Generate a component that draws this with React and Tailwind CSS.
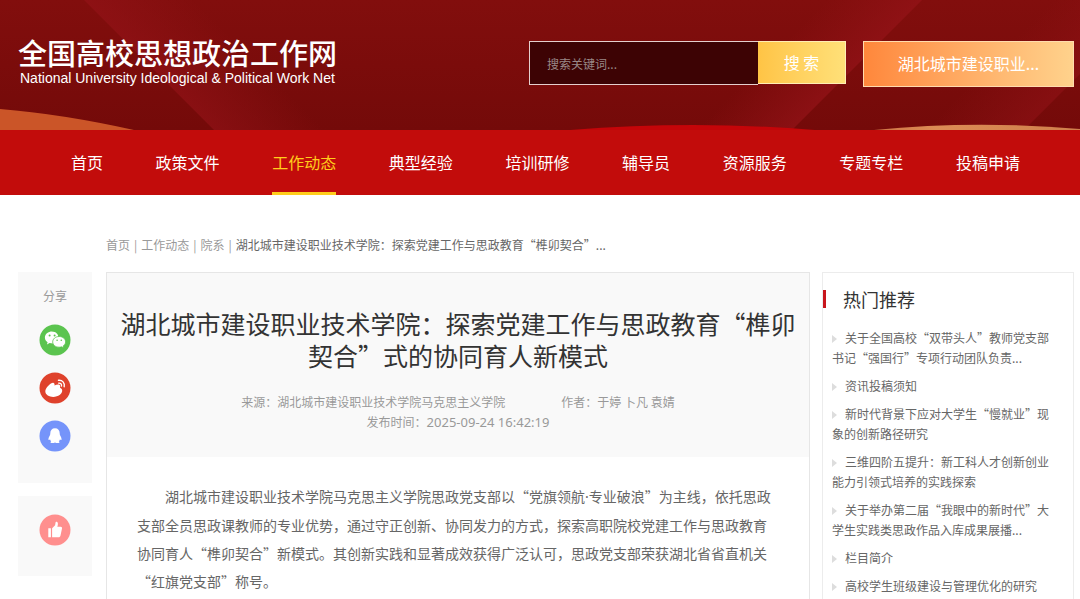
import React, { useState } from 'react';

const navItems = ['首页', '政策文件', '工作动态', '典型经验', '培训研修', '辅导员', '资源服务', '专题专栏', '投稿申请'];

const hotList = [
  '关于全国高校“双带头人”教师党支部书记“强国行”专项行动团队负责...',
  '资讯投稿须知',
  '新时代背景下应对大学生“慢就业”现象的创新路径研究',
  '三维四阶五提升：新工科人才创新创业能力引领式培养的实践探索',
  '关于举办第二届“我眼中的新时代”大学生实践类思政作品入库成果展播...',
  '栏目简介',
  '高校学生班级建设与管理优化的研究',
];

function BannerArt() {
  return (
    <svg className="absolute inset-0 h-full w-full" viewBox="0 0 1080 130" preserveAspectRatio="none" aria-hidden="true">
      <defs>
        <linearGradient id="base" x1="0" y1="0" x2="0" y2="1">
          <stop offset="0" stopColor="#820e0d" />
          <stop offset="1" stopColor="#740a09" />
        </linearGradient>
        <linearGradient id="beamLeft" gradientUnits="userSpaceOnUse" x1="150" y1="65" x2="205" y2="10">
          <stop offset="0" stopColor="#951318" stopOpacity="0.6" />
          <stop offset="1" stopColor="#951318" stopOpacity="0" />
        </linearGradient>
        <linearGradient id="beamRight" gradientUnits="userSpaceOnUse" x1="858" y1="65" x2="810" y2="17">
          <stop offset="0" stopColor="#951318" stopOpacity="0.7" />
          <stop offset="1" stopColor="#951318" stopOpacity="0" />
        </linearGradient>
        <linearGradient id="beamEdge" gradientUnits="userSpaceOnUse" x1="1085" y1="65" x2="1037" y2="17">
          <stop offset="0" stopColor="#951318" stopOpacity="0.5" />
          <stop offset="1" stopColor="#951318" stopOpacity="0" />
        </linearGradient>
        <linearGradient id="gold" x1="0" y1="0" x2="1" y2="0">
          <stop offset="0" stopColor="#cf7345" />
          <stop offset="0.3" stopColor="#dc8c55" />
          <stop offset="1" stopColor="#cf7f4c" />
        </linearGradient>
      </defs>
      <rect width="1080" height="130" fill="url(#base)" />
      <path d="M84 0H240L370 130H214Z" fill="url(#beamLeft)" />
      <path d="M922 0H780L650 130H792Z" fill="url(#beamRight)" />
      <path d="M1154 0H1010L880 130H1024Z" fill="url(#beamEdge)" />
      <path d="M0 109Q62 114 134 130H0Z" fill="#cb5528" />
      <path d="M570 130Q695 120 815 130Z" fill="#c40509" />
      <path d="M874 130Q975 120 1080 129V130Z" fill="url(#gold)" />
    </svg>
  );
}

function WechatIcon() {
  return (
    <svg viewBox="0 0 32 32" className="h-8 w-8" aria-hidden="true">
      <circle cx="16" cy="16" r="15.5" fill="#5bc44f" />
      <path fill="#fff" d="M13.2 7.6c-4.2 0-7.3 2.6-7.3 6 0 2 1 3.6 2.7 4.7l-.7 2.2 2.7-1.4c1 .3 2 .4 3.3.4h4c2-1.4 2-9-.1-10.1-1.2-1.1-2.8-1.8-5.3-1.8z" />
      <path fill="#fff" stroke="#5bc44f" strokeWidth="0.8" d="M20.2 12.5c-3.7 0-6.5 2.4-6.5 5.4s2.8 5.3 6.5 5.3c.8 0 1.6-.1 2.3-.4l2.2 1.3-.6-2c1.5-1 2.5-2.500 2.500-4.200 0-3-2.800-5.400-6.400-5.400z" />
      <g fill="#5bc44f">
        <circle cx="10.6" cy="11.6" r="1" />
        <circle cx="15.6" cy="11.6" r="1" />
        <circle cx="18.1" cy="16.3" r="0.8" />
        <circle cx="22.3" cy="16.3" r="0.8" />
      </g>
    </svg>
  );
}

function WeiboIcon() {
  return (
    <svg viewBox="0 0 32 32" className="h-8 w-8" aria-hidden="true">
      <circle cx="16" cy="16" r="15.5" fill="#df422c" />
      <path fill="#fff" d="M14.3 10.7c-1.7-.7-8 4.800-8 8.600 0 3.600 4 5.600 7.900 5.600 5.200 0 9-3.100 9-6.100 0-1.700-1.100-2.600-2.200-3 .5-1.500.3-2.600-.7-3.100-1.200-.6-3 0-4.800.7.200-1.300 0-2.300-1.200-2.700z" />
      <g fill="none" stroke="#fff" strokeLinecap="round">
        <path strokeWidth="1.4" d="M19.5 8.3c3.700-.5 6.600 2.500 5.700 6.400" />
        <path strokeWidth="1.3" d="M19.7 11.1c1.900-.2 3.100 1 2.800 2.900" />
      </g>
    </svg>
  );
}

function QqIcon() {
  return (
    <svg viewBox="0 0 32 32" className="h-8 w-8" aria-hidden="true">
      <circle cx="16" cy="16" r="15.5" fill="#7594fa" />
      <path fill="#fff" d="M16 8.2c-3 0-4.700 2.100-4.700 5 0 .8-.1 1.500-.5 2.200-1 1.600-1.500 2.900-1.300 4.300.1.700.7.500 1.500-.5.200.9.600 1.500 1.200 2-1 .5-1 1.500.2 1.700 1.200.2 2.600.1 3.600-.5 1 .6 2.400.7 3.600.5 1.200-.2 1.200-1.200.2-1.700.6-.5 1-1.100 1.200-2 .8 1 1.400 1.200 1.500.5.200-1.400-.3-2.700-1.300-4.300-.4-.7-.5-1.400-.5-2.200 0-2.900-1.700-5-4.700-5z" />
    </svg>
  );
}

function LikeIcon() {
  return (
    <svg viewBox="0 0 32 32" className="h-8 w-8" aria-hidden="true">
      <circle cx="16" cy="16" r="15.5" fill="#ff8f8e" />
      <path fill="#fff" d="M9.3 14.2h2.6v9H9.3zM13.1 14.3l3-3.1.5-2.900c.2-1 2.300-.7 2.300 1.400 0 1.300-.3 2.200-.6 3h3.400c1 0 1.500.8 1.300 1.700l-1.500 7c-.2 1.100-.9 1.800-2 1.800h-6.400z" />
    </svg>
  );
}

export default function App() {
  const [keyword, setKeyword] = useState('');

  return (
    <div lang="zh-CN" className="flex min-h-screen flex-col bg-white font-['Noto_Sans_CJK_SC','Noto_Sans',sans-serif] text-xs text-[#666]">
      <header className="relative h-[130px]">
        <BannerArt />
        <div className="relative flex items-start pr-[6px] pl-[18px]">
          {/* Logo */}
          <a href="#" className="block pt-9 whitespace-nowrap text-white">
            <span className="block text-[29px] leading-8 font-medium">全国高校思想政治工作网</span>
            <span className="mt-[2px] block pl-[2px] font-['Liberation_Sans',sans-serif] text-sm leading-4">
              National University Ideological &amp; Political Work Net
            </span>
          </a>

          {/* Buscador */}
          <form className="ml-auto flex items-start pt-[41px]" onSubmit={(e) => e.preventDefault()}>
            <input
              type="text"
              aria-label="搜索关键词"
              placeholder="搜索关键词..."
              value={keyword}
              onChange={(e) => setKeyword(e.target.value)}
              className="h-11 w-[229px] border border-r-0 border-[#e5cfce] bg-[#3d0304] px-[17px] text-xs text-white outline-none placeholder:text-[#998887]"
            />
            <button type="submit" className="h-[43px] w-[88px] border border-l-0 border-[#ffedb5] bg-linear-to-r from-[#ffc445] to-[#ffe078] pb-[2px] text-base text-white">
              搜 索
            </button>
          </form>
          <button type="button" className="mt-[41px] ml-[17px] h-[46px] w-[211px] border border-[#ffdcae] bg-linear-to-r from-[#ff873b] to-[#ffd28c] pb-[2px] text-base text-white">
            湖北城市建设职业...
          </button>
        </div>
      </header>

      <nav className="h-[65px] bg-[#c20c0b]">
        <ul className="flex h-full justify-between pr-[60px] pl-[71px]">
          {navItems.map((item) => (
            <li key={item} className="h-full">
              <a
                href="#"
                className={`flex h-full items-center border-b-3 pt-[2px] text-base whitespace-nowrap ${
                  item === '工作动态' ? 'border-b-[#ffcd1c] text-[#ffcd1c]' : 'border-b-transparent text-white'
                }`}
              >
                {item}
              </a>
            </li>
          ))}
        </ul>
      </nav>

      <div className="mb-[17px] flex gap-1 pt-10 pl-[106px] leading-5 whitespace-nowrap text-[#999]">
        <a href="#">首页</a>
        <span>|</span>
        <a href="#">工作动态</a>
        <span>|</span>
        <a href="#">院系</a>
        <span>|</span>
        <span className="text-[#666]">湖北城市建设职业技术学院：探索党建工作与思政教育“榫卯契合”...</span>
      </div>

      <main className="flex flex-1 pr-[6px] pl-[18px]">
        {/* Compartir */}
        <div className="w-[74px] shrink-0">
          <div className="flex h-[211px] flex-col items-center gap-4 bg-[#f9f9f9] pt-[14px]">
            <p className="mb-[2px] leading-5 text-[#999]">分享</p>
            <button type="button" aria-label="微信"><WechatIcon /></button>
            <button type="button" aria-label="微博"><WeiboIcon /></button>
            <button type="button" aria-label="QQ"><QqIcon /></button>
          </div>
          <div className="mt-[13px] flex h-20 items-start justify-center bg-[#f9f9f9] pt-[18px]">
            <button type="button" aria-label="点赞"><LikeIcon /></button>
          </div>
        </div>

        <article className="ml-[14px] min-w-0 flex-1 border border-b-0 border-[#e6e6e6]">
          <div className="h-[184px] bg-[#f9f9f9] px-3 pt-[34px] text-center">
            <h1 className="text-[25px] leading-8 text-[#333]">
              湖北城市建设职业技术学院：探索党建工作与思政教育“榫卯契合”式的协同育人新模式
            </h1>
            <div className="mt-[21px] leading-5 text-[#999]">
              <p className="flex justify-center gap-14">
                <span>来源：湖北城市建设职业技术学院马克思主义学院</span>
                <span>作者：于婷 卜凡 袁婧</span>
              </p>
              <p>
                发布时间：<time className="font-['Noto_Sans',sans-serif] text-[13px]">2025-09-24 16:42:19</time>
              </p>
            </div>
          </div>
          <p className="px-[30px] pt-[25px] indent-7 text-sm leading-7">
            湖北城市建设职业技术学院马克思主义学院思政党支部以“党旗领航<span className="font-['Noto_Sans',sans-serif]">·</span>专业破浪”为主线，依托思政支部全员思政课教师的专业优势，通过守正创新、协同发力的方式，探索高职院校党建工作与思政教育协同育人“榫卯契合”新模式。其创新实践和显著成效获得广泛认可，思政党支部荣获湖北省省直机关“红旗党支部”称号。
          </p>
        </article>

        {/* Recomendados */}
        <aside className="ml-3 w-[252px] shrink-0 border border-b-0 border-[#ececec]">
          <h2 className="mt-[17px] flex items-center text-lg leading-[18px] text-[#333]">
            <span className="mr-[17px] h-[18px] w-[3px] bg-[#c8161d]" />
            热门推荐
          </h2>
          <ul className="mt-5 space-y-2 pr-[17px] pl-[9px] leading-5">
            {hotList.map((item) => (
              <li key={item}>
                <a href="#">
                  <span className="mr-2 inline-block border-y-4 border-l-5 border-y-transparent border-l-[#ddd]" />
                  {item}
                </a>
              </li>
            ))}
          </ul>
        </aside>
      </main>
    </div>
  );
}
